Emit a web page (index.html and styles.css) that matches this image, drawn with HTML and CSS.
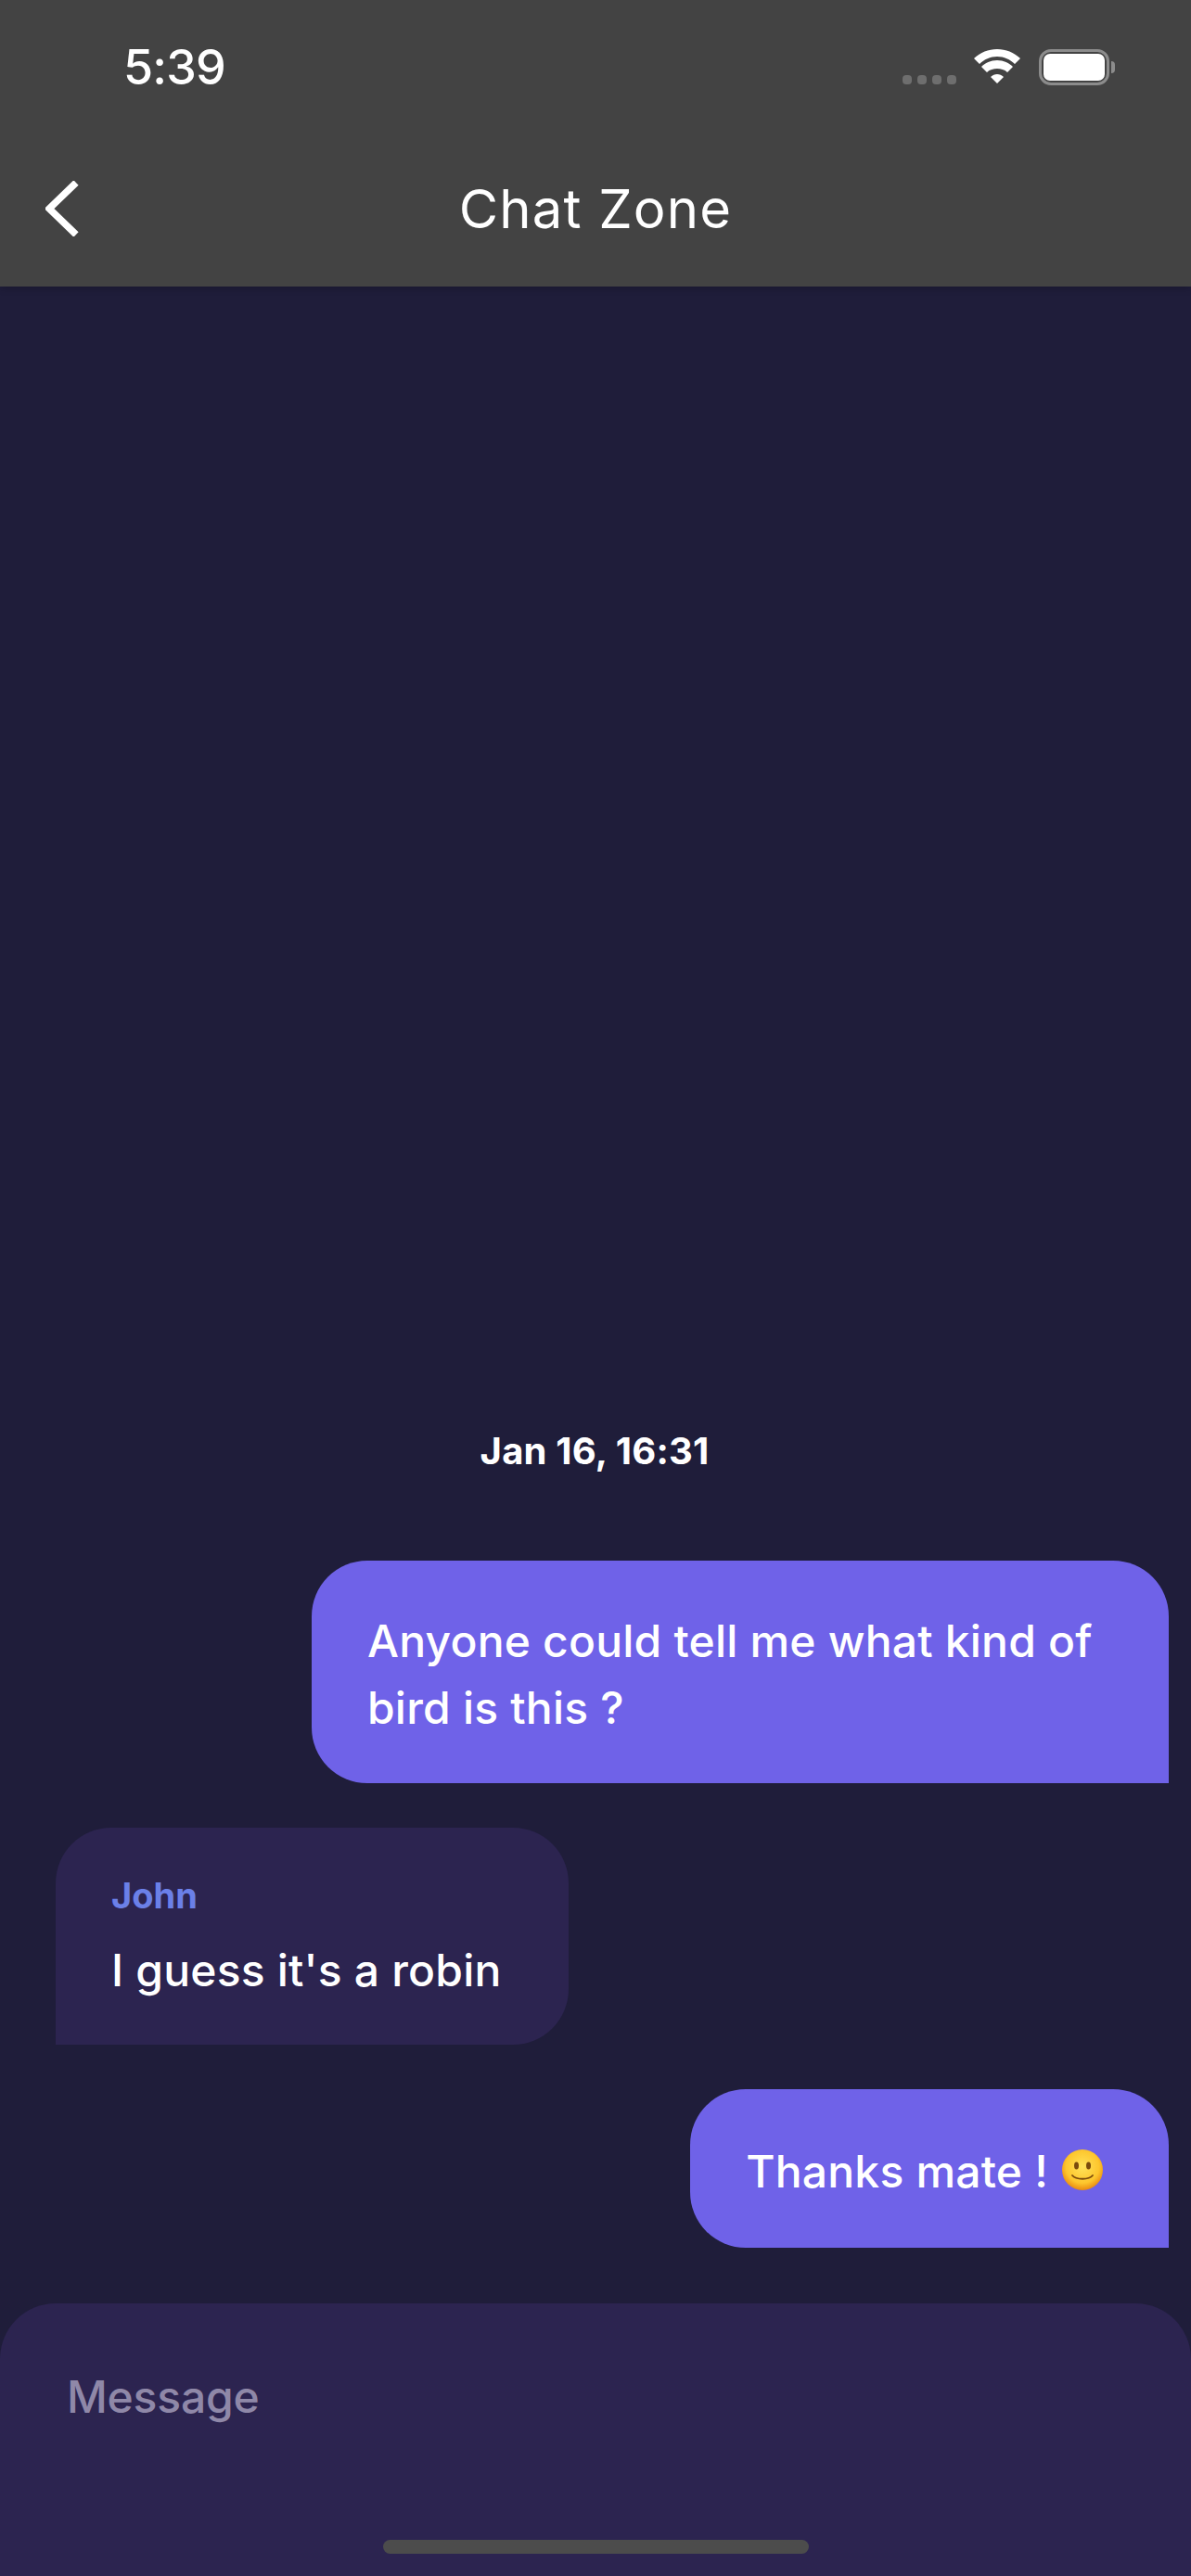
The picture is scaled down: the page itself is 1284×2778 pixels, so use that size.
FILE: index.html
```html
<!DOCTYPE html>
<html>
<head>
    <title>Chat Zone</title>
    <link rel="stylesheet" href="styles.css">
</head>
<body>
    <div class="page">
        <header class="header">
            <div class="status-bar">
                <span class="time">5:39</span>
                <div class="status-icons">
                    <div class="signal">
                        <span class="dot"></span>
                        <span class="dot"></span>
                        <span class="dot"></span>
                        <span class="dot"></span>
                    </div>
                    <svg class="wifi" width="50" height="37" viewBox="0 0 50 37">
                        <path fill="#fff" d="M0 10C7 3.500 15.500 0 25 0C34.500 0 43 3.500 50 10L44 16C39 11 32.500 8 25 8C17.500 8 11 11 6 16Z"/>
                        <path fill="#fff" d="M8 19C12 15 18 12 25 12C32 12 38 15 42 19L36 25C33 22 29 21 25 21C21 21 17 22 14 25Z"/>
                        <path fill="#fff" d="M18 30C20 28 22.500 27 25 27C27.500 27 30 28 32 30L25 37Z"/>
                    </svg>
                    <div class="battery">
                        <div class="battery-body"><div class="battery-level"></div></div>
                        <div class="battery-nub"></div>
                    </div>
                </div>
            </div>
            <div class="nav-bar">
                <svg class="back" width="36" height="60" viewBox="0 0 36 60">
                    <path fill="none" stroke="#fff" stroke-width="7.500" d="M33 2L4 30L33 58"/>
                </svg>
                <h1 class="title">Chat Zone</h1>
            </div>
        </header>

        <main class="messages">
            <div class="timestamp">Jan 16, 16:31</div>
            <div class="bubble mine">Anyone could tell me what kind of bird is this ?</div>
            <div class="bubble other">
                <div class="sender">John</div>
                <div>I guess it's a robin</div>
            </div>
            <div class="bubble mine emoji-line">
                Thanks mate !
                <svg class="emoji" width="44" height="44" viewBox="0 0 44 44">
                    <defs>
                        <radialGradient id="face" cx="50%" cy="42%" r="58%">
                            <stop offset="0" stop-color="#ffe25a"/>
                            <stop offset="0.7" stop-color="#fdc62d"/>
                            <stop offset="1" stop-color="#e98a10"/>
                        </radialGradient>
                    </defs>
                    <circle cx="22" cy="22" r="22" fill="url(#face)"/>
                    <ellipse cx="15.500" cy="17.500" rx="2.500" ry="4" fill="#7a4a0c"/>
                    <ellipse cx="28.500" cy="17.500" rx="2.500" ry="4" fill="#7a4a0c"/>
                    <path fill="none" stroke="#7a4a0c" stroke-width="1.800" stroke-linecap="round" d="M11 28C15 33 29 33 33 28"/>
                </svg>
            </div>
        </main>

        <footer class="composer">
            <div class="placeholder">Message</div>
            <div class="home-bar"></div>
        </footer>
    </div>
</body>
</html>
```

FILE: styles.css
```css
body {
    margin: 0;
    background: #1f1d3a;
    color: #ffffff;
    font-family: Inter, "Noto Sans", sans-serif;
}

.page {
    display: flex;
    flex-direction: column;
    width: 1284px;
    height: 2778px;
    overflow: hidden;
}

.header {
    height: 309px;
    background: #434343;
    box-shadow: 0 2px 8px rgba(0, 0, 0, 0.2);
    flex-shrink: 0;
}

.status-bar {
    display: flex;
    justify-content: space-between;
    height: 146px;
    padding: 43px 82px 0 133px;
    box-sizing: border-box;
}

.time {
    font-size: 52px;
    font-weight: 500;
    line-height: 60px;
    letter-spacing: -0.8px;
}

.status-icons {
    display: flex;
    align-items: flex-start;
    padding-top: 10px;
}

.signal {
    display: flex;
    gap: 6px;
    margin-top: 28px;
    margin-right: 19px;
}

.dot {
    width: 10px;
    height: 10px;
    border-radius: 4px;
    background: #6e6e6e;
}

.wifi {
    margin-right: 20px;
}

.battery {
    display: flex;
    align-items: center;
    gap: 2px;
}

.battery-body {
    width: 76px;
    height: 39px;
    padding: 2px;
    border: 3px solid #8c8c8c;
    border-radius: 13px;
    box-sizing: border-box;
}

.battery-level {
    height: 100%;
    border-radius: 7px;
    background: #ffffff;
}

.battery-nub {
    width: 4px;
    height: 13px;
    border-radius: 0 4px 4px 0;
    background: #8c8c8c;
}

.nav-bar {
    position: relative;
    display: flex;
    justify-content: center;
    align-items: center;
    height: 160px;
    margin-top: -1px;
}

.back {
    position: absolute;
    left: 49px;
    top: 50px;
}

.title {
    margin: 0;
    font-size: 58px;
    font-weight: 400;
    letter-spacing: 1.2px;
}

.messages {
    flex: 1;
    display: flex;
    flex-direction: column;
    justify-content: flex-end;
    align-items: flex-end;
    gap: 48px;
    padding: 0 24px 60px 24px;
}

.timestamp {
    align-self: center;
    margin-bottom: 46px;
    margin-right: 2px;
    font-size: 40px;
    font-weight: 700;
    line-height: 48px;
    letter-spacing: 0.2px;
}

.bubble {
    max-width: 924px;
    padding: 48px 60px;
    box-sizing: border-box;
    border-radius: 60px;
    font-size: 48px;
    font-weight: 450;
    line-height: 72px;
    letter-spacing: 0.2px;
}

.mine {
    padding-top: 51px;
    padding-bottom: 45px;
    background: #6f62e8;
    border-bottom-right-radius: 0;
}

.other {
    align-self: flex-start;
    margin-left: 36px;
    padding-top: 50px;
    padding-right: 72px;
    padding-bottom: 44px;
    background: #2c2450;
    border-bottom-left-radius: 0;
}

.sender {
    font-size: 38px;
    font-weight: 700;
    line-height: 46px;
    margin-bottom: 22px;
    letter-spacing: 0;
    color: #6b80e8;
}

.emoji-line {
    line-height: 75px;
}

.emoji {
    vertical-align: -3px;
    margin-left: 2px;
    margin-right: 11px;
}

.composer {
    position: relative;
    height: 294px;
    flex-shrink: 0;
    background: #2c2450;
    border-radius: 60px 60px 0 0;
}

.placeholder {
    padding: 68px 0 0 72px;
    font-size: 48px;
    font-weight: 450;
    line-height: 66px;
    letter-spacing: -0.2px;
    color: #8f88a8;
}

.home-bar {
    position: absolute;
    left: 413px;
    top: 255px;
    width: 459px;
    height: 15px;
    border-radius: 8px;
    background: #4c4c4c;
}
```
